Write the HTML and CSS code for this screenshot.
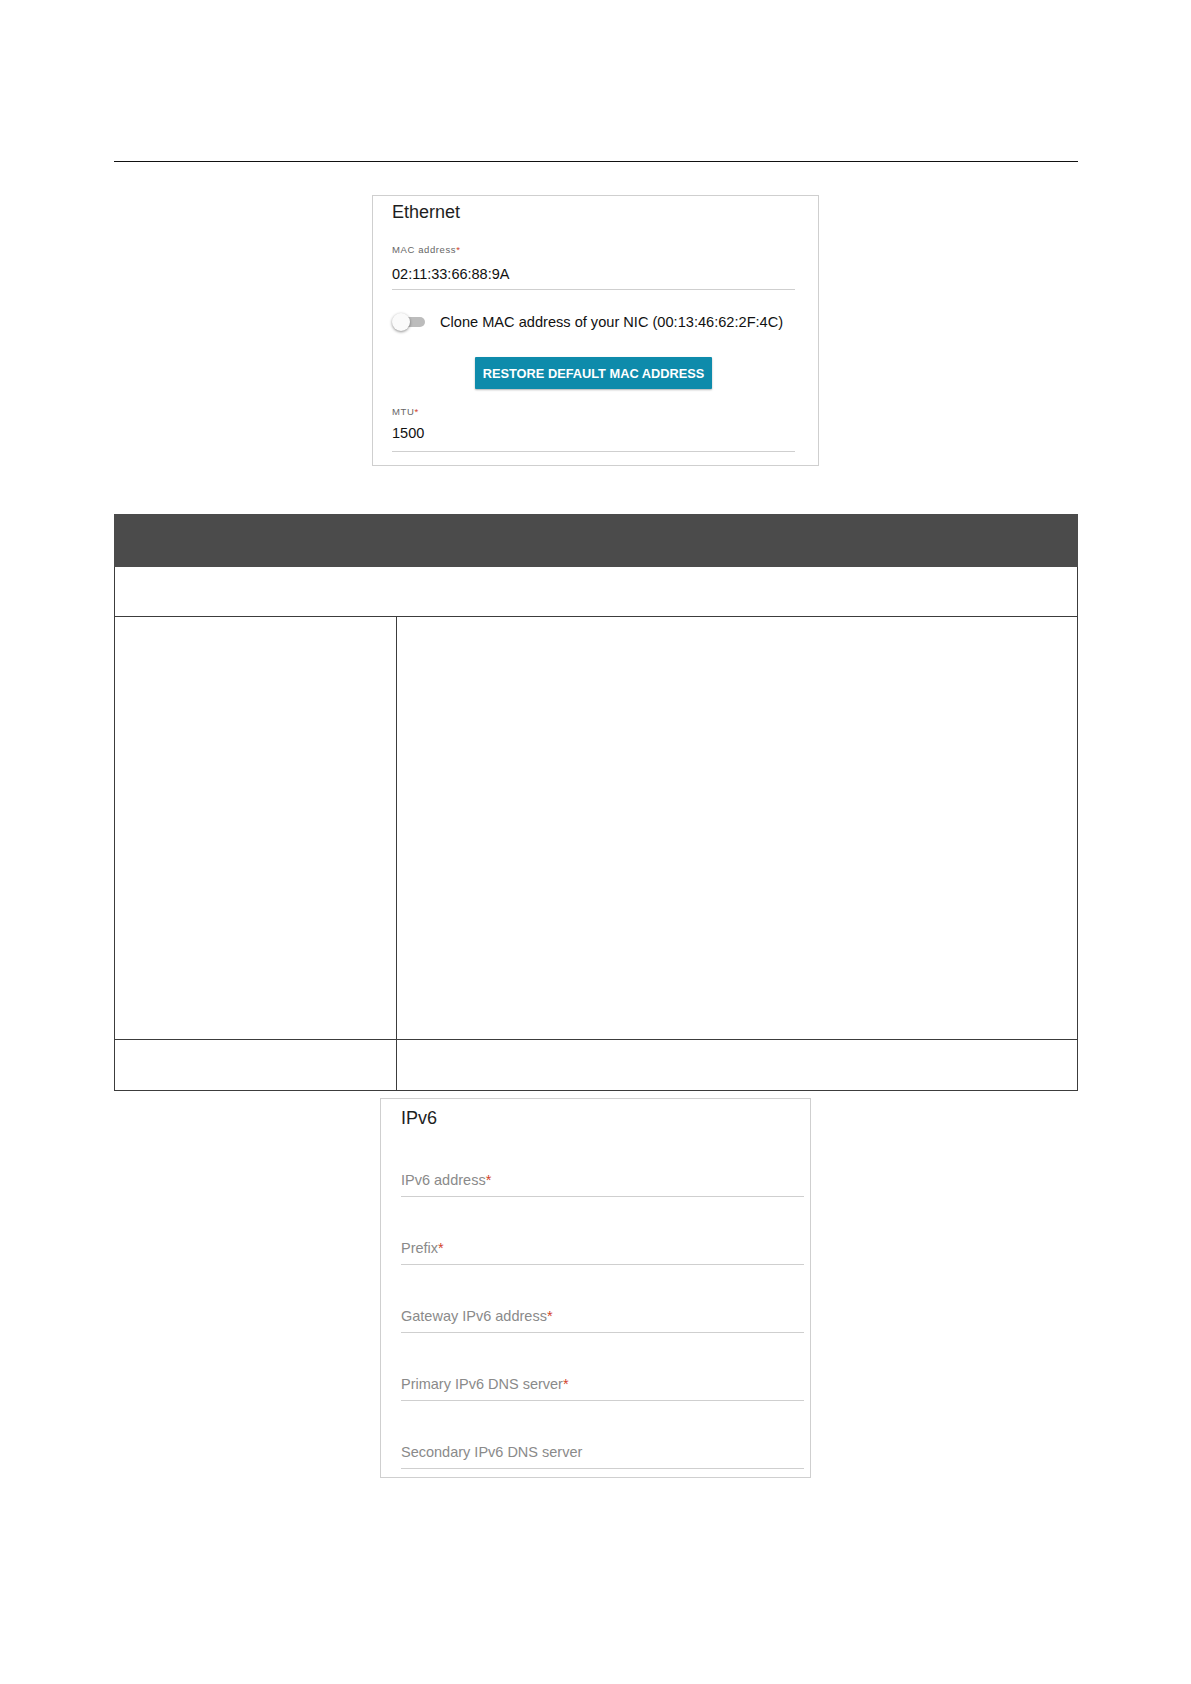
FILE: index.html
```html
<!DOCTYPE html>
<html lang="en">

<head>
    <meta charset="UTF-8">
    <meta name="viewport" content="width=device-width, initial-scale=1.0">
    <link rel="stylesheet" href="styles.css">
    <title>Ethernet / IPv6 settings</title>
</head>

<body>
    <div class="page">
        <hr class="rule">

        <section class="card card-ethernet">
            <h2 class="card-title">Ethernet</h2>

            <div class="field">
                <div class="field-label">MAC address<span class="req">*</span></div>
                <div class="field-value">02:11:33:66:88:9A</div>
            </div>

            <div class="switch-row">
                <span class="switch"><span class="switch-track"></span><span class="switch-knob"></span></span>
                <span class="switch-text">Clone MAC address of your NIC (00:13:46:62:2F:4C)</span>
            </div>

            <div class="button-row">
                <button class="btn-restore">RESTORE DEFAULT MAC ADDRESS</button>
            </div>

            <div class="field field-mtu">
                <div class="field-label">MTU<span class="req">*</span></div>
                <div class="field-value">1500</div>
            </div>
        </section>

        <table class="params">
            <tr class="params-head">
                <td colspan="2"></td>
            </tr>
            <tr class="params-sub">
                <td colspan="2"></td>
            </tr>
            <tr class="params-tall">
                <td class="col-name"></td>
                <td></td>
            </tr>
            <tr class="params-row">
                <td class="col-name"></td>
                <td></td>
            </tr>
        </table>

        <section class="card card-ipv6">
            <h2 class="card-title">IPv6</h2>

            <div class="input">IPv6 address<span class="req">*</span></div>
            <div class="input">Prefix<span class="req">*</span></div>
            <div class="input">Gateway IPv6 address<span class="req">*</span></div>
            <div class="input">Primary IPv6 DNS server<span class="req">*</span></div>
            <div class="input">Secondary IPv6 DNS server</div>
        </section>
    </div>
</body>

</html>
```

FILE: styles.css
```css
body {
    margin: 0;
    font-family: "Liberation Sans", Arial, sans-serif;
    color: #222;
    background: #fff;
}

.page {
    width: 964px;
    margin: 0 auto;
    padding-bottom: 200px;
}

.rule {
    margin: 161px 0 0;
    border: 0;
    border-top: 1px solid #111;
    height: 0;
}

/* setting cards */
.card {
    border: 1px solid #cfcfcf;
    box-sizing: border-box;
    margin: 0 auto;
}

.card-title {
    margin: 0;
    font-size: 18px;
    font-weight: normal;
    line-height: 22px;
    color: #1e1e1e;
}

.req {
    color: #d2452c;
}

.card-ethernet {
    width: 447px;
    margin-top: 33px;
    padding: 5px 23px 13px 19px;
}

.field {
    margin-top: 21px;
    border-bottom: 1px solid #cfcfcf;
    padding-bottom: 6px;
}

.field-label {
    font-size: 9.5px;
    line-height: 12px;
    letter-spacing: 0.6px;
    color: #666;
}

.field-value {
    margin-top: 9px;
    font-size: 14.5px;
    line-height: 18px;
    color: #111;
}

.field-mtu {
    margin-top: 17px;
    padding-bottom: 9px;
}

.field-mtu .field-value {
    margin-top: 6px;
}

.switch-row {
    display: flex;
    align-items: center;
    gap: 14px;
    margin-top: 22px;
    height: 20px;
}

.switch {
    position: relative;
    width: 34px;
    height: 20px;
    flex: none;
}

.switch-track {
    position: absolute;
    left: 9px;
    top: 5px;
    width: 24px;
    height: 10px;
    border-radius: 5px;
    background: #bcbcbc;
}

.switch-knob {
    position: absolute;
    left: 0;
    top: 1px;
    width: 18px;
    height: 18px;
    border-radius: 50%;
    background: #fafafa;
    box-shadow: 0 1px 3px rgba(0, 0, 0, 0.45);
}

.switch-text {
    font-size: 14.6px;
    color: #111;
    white-space: nowrap;
}

.button-row {
    display: flex;
    justify-content: center;
    margin-top: 25px;
}

.btn-restore {
    height: 32px;
    padding: 0 8px;
    border: 0;
    border-radius: 1px;
    background-color: #0e8bab;
    color: #fff;
    font-family: "Liberation Sans", Arial, sans-serif;
    font-size: 12.8px;
    font-weight: bold;
    box-shadow: 0 1px 2px rgba(0, 0, 0, 0.3);
    cursor: pointer;
}

/* parameter table */
.params {
    width: 964px;
    margin-top: 48px;
    border-collapse: collapse;
}

.params td {
    border: 1px solid #3c3c3c;
    padding: 0;
}

.params-head td {
    height: 51px;
    background-color: #4b4b4b;
    border-color: #4b4b4b;
}

.params-sub td {
    height: 49px;
}

.params-tall td {
    height: 422px;
}

.params-row td {
    height: 50px;
}

.col-name {
    width: 281px;
}

.card-ipv6 {
    width: 431px;
    margin-top: 7px;
    padding: 8px 6px 8px 20px;
}

.input {
    margin-top: 42px;
    padding-bottom: 7px;
    border-bottom: 1px solid #cfcfcf;
    font-size: 14.5px;
    line-height: 18px;
    color: #8a8a8a;
}
```
